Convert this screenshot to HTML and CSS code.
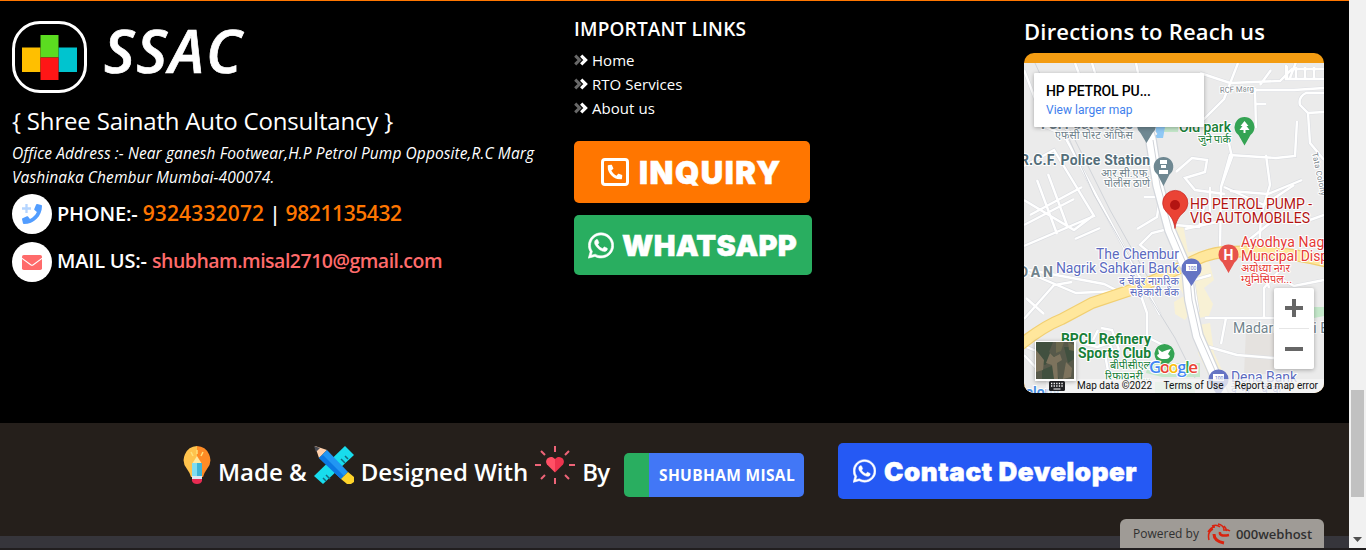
FILE: index.html
```html
<!DOCTYPE html>
<html lang="en">
<head>
<meta charset="utf-8">
<title>SSAC</title>
<link rel="stylesheet" href="styles.css">
</head>
<body>
<svg width="0" height="0" class="defs">
  <symbol id="whatsapp" viewBox="0 0 448 512"><path d="M380.9 97.1C339 55.1 283.2 32 223.9 32c-122.4 0-222 99.6-222 222 0 39.1 10.2 77.3 29.6 111L0 480l117.7-30.9c32.4 17.7 68.9 27 106.1 27h.1c122.3 0 224.1-99.6 224.1-222 0-59.3-25.2-115-67.1-157zm-157 341.6c-33.2 0-65.7-8.9-94-25.7l-6.7-4-69.8 18.3L72 359.2l-4.4-7c-18.5-29.4-28.2-63.3-28.2-98.2 0-101.7 82.8-184.5 184.6-184.5 49.3 0 95.6 19.2 130.4 54.1 34.8 34.9 56.2 81.2 56.1 130.5 0 101.8-84.9 184.6-186.6 184.6zm101.2-138.2c-5.500-2.800-32.800-16.200-37.900-18-5.100-1.900-8.800-2.800-12.500 2.800-3.700 5.600-14.300 18-17.600 21.800-3.200 3.700-6.500 4.200-12 1.400-32.600-16.300-54-29.100-75.500-66-5.700-9.800 5.700-9.100 16.300-30.300 1.800-3.700.9-6.900-.5-9.700-1.400-2.800-12.500-30.100-17.100-41.200-4.500-10.800-9.100-9.300-12.500-9.500-3.200-.2-6.900-.2-10.600-.2-3.700 0-9.700 1.400-14.800 6.900-5.100 5.600-19.400 19-19.400 46.300 0 27.300 19.900 53.700 22.600 57.400 2.800 3.700 39.100 59.700 94.800 83.800 35.200 15.200 49 16.500 66.600 13.900 10.700-1.600 32.800-13.400 37.400-26.400 4.600-13 4.600-24.100 3.200-26.400-1.300-2.500-5-3.900-10.500-6.600z"/></symbol>
  <symbol id="phone" viewBox="0 0 512 512"><path d="M493.400 24.600l-104-24c-11.300-2.600-22.900 3.300-27.500 13.900l-48 112c-4.200 9.800-1.400 21.300 6.900 28l60.600 49.600c-36 76.700-98.900 140.500-177.200 177.200l-49.600-60.600c-6.800-8.300-18.200-11.100-28-6.900l-112 48C3.900 366.500-2 378.100.6 389.400l24 104C27.100 504.200 36.700 512 48 512c256.100 0 464-207.500 464-464 0-11.200-7.700-20.900-18.600-23.400z"/></symbol>
  <symbol id="angles" viewBox="0 0 15 12"><path d="M1.200 1.600 5.600 6 1.200 10.400" fill="none" stroke="#686868" stroke-width="3"/><path d="M7.200 1.600 11.600 6 7.200 10.400" fill="none" stroke="#fff" stroke-width="3.200"/></symbol>
</svg>
<div class="window">
  <main class="page">
    <footer class="footer">
      <section class="about">
        <div class="brand">
          <div class="logo"><svg width="55" height="45" viewBox="0 0 55 45"><path fill="#ffbf00" d="M0 12.500h18.500v24.500H0z"/><path fill="#00c4cf" d="M36.500 12.500H55v24.500H36.500z"/><path fill="#5bdc20" d="M18.500 0h18v22.500h-18z"/><path fill="#ff1616" d="M18.500 22.500h18V45h-18z"/></svg></div>
          <span class="brand-name">SSAC</span>
        </div>
        <h3 class="company">{ Shree Sainath Auto Consultancy }</h3>
        <p class="address">Office Address :- Near ganesh Footwear,H.P Petrol Pump Opposite,R.C Marg<br>Vashinaka Chembur Mumbai-400074.</p>
        <div class="contact">
          <span class="disc"><svg width="20" height="20" viewBox="0 0 20 20"><path d="M4.500 0v9M0 4.500h9" stroke="#b5d5ff" stroke-width="2.300"/><use href="#phone" x="0" y="0" width="20" height="20" fill="#529dff"/></svg></span>
          <span class="contact-text"><span class="label">PHONE:-</span> <a class="tel">9324332072</a> | <a class="tel second">9821135432</a></span>
        </div>
        <div class="contact">
          <span class="disc"><svg width="20" height="15" viewBox="0 0 20 15"><rect width="20" height="15" rx="1.800" fill="#ff6b6b"/><path d="M-.5 3 8.700 9.800q1.300.9 2.600 0L20.500 3" fill="none" stroke="#fff" stroke-width="1.100"/></svg></span>
          <span class="contact-text"><span class="label">MAIL US:-</span> <a class="mail">shubham.misal2710@gmail.com</a></span>
        </div>
      </section>
      <section class="links">
        <h4 class="links-title">IMPORTANT LINKS</h4>
        <ul class="link-list">
          <li><svg class="angles"><use href="#angles"/></svg>Home</li>
          <li><svg class="angles"><use href="#angles"/></svg>RTO Services</li>
          <li><svg class="angles"><use href="#angles"/></svg>About us</li>
        </ul>
        <a class="btn inquiry"><svg width="28" height="28" viewBox="0 0 28 28"><rect x="1.500" y="1.500" width="25" height="25" rx="2.500" fill="none" stroke="#fff" stroke-width="3"/><use href="#phone" x="6.500" y="6.500" width="15" height="15" fill="#fff" transform="matrix(-1 0 0 1 28 0)"/></svg>INQUIRY</a>
        <a class="btn whatsapp"><svg width="26" height="29" class="wa"><use href="#whatsapp"/></svg>WHATSAPP</a>
      </section>
      <section class="directions">
        <h3 class="directions-title">Directions to Reach us</h3>
        <div class="map">
<svg class="map-canvas" width="300" height="330" viewBox="1024 63 300 330">
  <rect x="1024" y="63" width="300" height="330" fill="#ebebeb"/>
  <path fill="#f8f1d5" d="M1174 224h9l5 28 18-2 8 30-10 8 9 16-4 12-10 2-6-10-8 12-10-6-1-12 10-6-5-10zM1199 325l11-2 4 30 14 30h-16l-14-30z"/>
  <path fill="#c4e8ca" d="M1148 363h52v14h-38l-16-4zM1314 307h10v9l-10 2zM1160 124h18v8h-18zM1155 382h40v11h-40z"/>
  <path fill="#8fc8f5" d="M1156 127h9l-2 11h-8z"/>
  <path fill="#e5e2df" d="M1246 330h28v44h-30z"/>
  <g fill="none" stroke-width="3.600" stroke="#dcdee2"><use href="#streets"/></g>
  <g fill="none" stroke="#fff" stroke-width="2.400">
    <g id="streets">
    <path d="M1024 70l22 57 18 8 96 180M1092 63l6 20M1136 63l12 60 8 12M1075 63l22 60M1200 73l30 10 50-2 12-12h32M1238 63l-14 36-20 20-16 8M1286 65v14h38M1290 78l6-16M1255 88l1 40M1256 90h38l30-2M1256 104h10M1260 85l11-15M1287 66v12M1296 67v12M1305 67v12M1314 67v12M1324 93l-18 0q-8 4-6 12l8 8 16-1M1297 121l-2 35-19 2-46-3-9 32-1 65M1224 187l40 18 30-20M1221 187l11-30-6-27M1266 155l4 30-9 30-2 38M1308 113l2 30 14 17"/>
    <path d="M1024 200l50 30 20-15M1024 246l70-30-40-66-30 16M1030 215l52-28M1037 180l20 54M1048 174l20 54M1024 225l50-26M1075 239l25-11M1144 197h14M1160 197l-3 20-20 12M1150 253l-10-8 12-12 20-5M1175 225l24 2 5-20M1176 172l16-14 15 2-2 12-20 6 10 12 30 4M1230 191l38 3 34-14M1210 187v32M1221 221l-36 8M1280 215l-35 28M1296 225l28-10"/>
    <path d="M1024 271l52 22 42-2-14-7-80-15M1024 319l30-34 18-3M1044 314l-18-16M1140 293l7 20v24l20 10M1104 349l7 38M1082 343l15 4 12-4 10 20M1098 330l-5 10M1119 350l-7-20-11-2M1054 358l-30-12M1024 355l36 38M1205 318h96M1198 312l-5-32 18-5M1202 345l35 10 37 3M1226 318l-5 26M1280 270l-16 18v30M1265 270l4 18M1324 280l-30 6-20-11"/>
    </g>
  </g>
  <path fill="none" stroke="#d0d3d8" d="M1035 63l28 62 31 70 46 80M1147 293l28 45 20 40M1070 130l40 80 45 80"/>
  <path fill="none" stroke="#f1cf72" stroke-width="12" d="M1020 345Q1044 326 1062 319L1092 303 1140 287 1188 264Q1205 254 1223 252 1278 249 1328 262"/>
  <path fill="none" stroke="#ffe79c" stroke-width="9.500" d="M1020 345Q1044 326 1062 319L1092 303 1140 287 1188 264Q1205 254 1223 252 1278 249 1328 262"/>
  <path fill="none" stroke="#d4d7dc" stroke-width="12" d="M1142 110L1151 140 1158 185 1170 230 1187 270 1190 300 1198 336 1215 375 1224 396"/>
  <path fill="none" stroke="#fff" stroke-width="9.500" d="M1142 110L1151 140 1158 185 1170 230 1187 270 1190 300 1198 336 1215 375 1224 396"/>
  <path fill="none" stroke="#cfd2d8" d="M1153 140L1160 185 1172 230 1189 270 1192 300 1200 336 1217 375"/>
  <g class="place" text-anchor="end">
    <g fill="#71838c">
      <text x="1133" y="129" textLength="92" class="p13 b">FCI Post Office</text>
      <text x="1133" y="139" textLength="78" class="p11">एफसी पोस्ट ऑफिस</text>
      <text x="1150" y="165" textLength="130" class="p13 b dark">R.C.F. Police Station</text>
      <text x="1150" y="177" textLength="49" class="p11">आर.सी.एफ.</text>
      <text x="1150" y="187" textLength="46" class="p11">पोलीस ठाणे</text>
      <text x="1053" y="277" textLength="34" class="p13 b">DAN</text>
    </g>
    <g fill="#5c6bc0">
      <text x="1179" y="259" textLength="83" class="p13">The Chembur</text>
      <text x="1179" y="273" textLength="123" class="p13">Nagrik Sahkari Bank</text>
      <text x="1179" y="285" textLength="60" class="p11">द चेंबूर नागरिक</text>
      <text x="1179" y="296" textLength="49" class="p11">सहकारी बँक</text>
    </g>
    <g fill="#188038">
      <text x="1231" y="132" textLength="52" class="p13 m">Old park</text>
      <text x="1231" y="143" textLength="33" class="p11">जुने पार्क</text>
      <text x="1151" y="344" textLength="90" class="p13 b">BPCL Refinery</text>
      <text x="1151" y="358" textLength="73" class="p13 b">Sports Club</text>
      <text x="1151" y="369" textLength="41" class="p11">बीपीसीएल</text>
      <text x="1151" y="380" textLength="46" class="p11">रिफायनरी...</text>
    </g>
  </g>
  <g class="place">
    <text x="1190" y="209" textLength="122" class="p14" fill="#b31412">HP PETROL PUMP -</text>
    <text x="1190" y="223" textLength="120" class="p14" fill="#b31412">VIG AUTOMOBILES</text>
    <g fill="#e53935">
      <text x="1241" y="247" textLength="96" class="p13">Ayodhya Nagar</text>
      <text x="1241" y="261" textLength="128" class="p13">Muncipal Dispensary</text>
      <text x="1241" y="272" textLength="49" class="p11">अयोध्या नगर</text>
      <text x="1241" y="283" textLength="51" class="p11">म्युनिसिपल...</text>
    </g>
    <text x="1233" y="333" class="p13" fill="#71838c" textLength="96">Madarsa wali B</text>
    <text x="1231" y="382" textLength="66" class="p13" fill="#5c6bc0">Dena Bank</text>
    <text x="1231" y="393" textLength="50" class="p11" fill="#5c6bc0">देना बँक</text>
    <text x="1220" y="93" textLength="34" class="p8" fill="#7b858c" transform="rotate(-3 1220 93)">RCF Marg</text>
    <text x="1312" y="153" textLength="44" class="p8" fill="#7b858c" transform="rotate(78 1312 153)">Tata Colony</text>
    <text x="1016" y="397" class="p13 b" fill="#4a8fe0">Colony</text>
  </g>
  <g fill="#6f8892"><path d="M1146.500 143l-6-10a9.500 9.500 0 1 1 12 0zM1163.500 186l-6-11.500a9.800 9.800 0 1 1 12 0z"/></g>
  <path fill="#fff" d="M1160 160h7v4h-7zM1161 165h5v3h-5zM1159 170h9v4h-9z"/>
  <path fill="#34a353" d="M1244.500 145.500l-6-10.500a10 10 0 1 1 12 0zM1164.500 367l-8-7a10 10 0 1 1 16 0z"/>
  <path fill="#fff" d="M1244.500 121l4 5h-2l3 4h-4v3h-2v-3h-4l3-4h-2zM1158 349l4 3 5-2 4-1-3 5 2 2q-1 3-4 3h-4q-4-1-5-4l2-1z"/>
  <path fill="#6574c4" d="M1191.500 286l-6.500-10a10 10 0 1 1 13 0zM1218.500 397l-6.500-10a10 10 0 1 1 13 0z"/>
  <path fill="#fff" d="M1186 264h11v7h-11zM1213 374h11v7h-11z"/>
  <text x="1188" y="270" class="p5" fill="#6574c4">100</text><text x="1215" y="380" class="p5" fill="#6574c4">100</text>
  <path fill="#e7524b" d="M1228.500 273l-6-10.500a10 10 0 1 1 12 0z"/><text x="1223.500" y="260" class="p13 b" fill="#fff">H</text>
  <path fill="#ea4335" stroke="#c5221f" stroke-width=".7" d="M1175 228.500c-1-8-4-12-8-16a12.600 12.600 0 1 1 16.500 0c-5 4-7.500 9-8.500 16z"/><circle cx="1175" cy="205" r="5" fill="#b31412"/>
  <g class="google"><text x="1149" y="373" textLength="49"><tspan fill="#4285f4">G</tspan><tspan fill="#ea4335">o</tspan><tspan fill="#fbbc05">o</tspan><tspan fill="#4285f4">g</tspan><tspan fill="#34a853">l</tspan><tspan fill="#ea4335">e</tspan></text></g>
  <path fill="#f5f5f5" fill-opacity=".78" d="M1046 379h278v14h-278z"/>
  <rect x="1035" y="341" width="41" height="40" fill="#fff" class="shade"/>
  <path fill="#57594a" d="M1036 342h38v37h-38z"/>
  <path fill="#41503f" d="M1036 342h17l-4 10 6 5-10 8-9-3zM1064 347h10v12l-6 4zM1042 370l12-5 5 14h-17z"/>
  <path fill="#7d735d" d="M1050 353l4 4 6-3 2 6-5 3 1 16h-4l-2-14-6-2zM1036 350l8 10-1 10-7 2zM1066 362l6 6-1 9-8 2z"/>
  <path fill="#6c694f" d="M1056 342h8l-3 9-5 2zM1068 342l6 3v6l-5-1z"/>
  <rect x="1049" y="381" width="16" height="10" rx="1.500" fill="#202124"/><path stroke="#fff" stroke-width="1.300" stroke-dasharray="1.300 1.300" d="M1051 383.500h12.500M1051 386h12.500"/><path stroke="#fff" stroke-width="1.200" d="M1053.500 389h7"/>
  <g class="legal"><text x="1077" y="389" textLength="75">Map data ©2022</text><text x="1163.500" y="389" textLength="60">Terms of Use</text><text x="1234.500" y="389" textLength="83.500">Report a map error</text></g>
  <rect x="1274" y="288" width="40" height="81" rx="2" fill="#fff" class="shade"/>
  <path stroke="#e6e6e6" d="M1279 328.500h30"/><path stroke="#666" stroke-width="4" d="M1285 308h18M1294 299v18M1285 349h18"/>
  <rect x="1034" y="73" width="170" height="54" rx="1" fill="#fff" class="shade"/>
  <text x="1046" y="96" textLength="105" class="card-title">HP PETROL PU...</text>
  <text x="1046" y="114" textLength="86.500" class="card-link">View larger map</text>
</svg>
        </div>
      </section>
    </footer>
    <div class="credits">
      <div class="made">
        <svg width="30" height="40" viewBox="0 0 30 40" class="bulb"><path fill="#ffc34d" d="M15 1a14 14 0 0 0-10 23q3 4 4 8h6z"/><path fill="#ff8b25" d="M15 1a14 14 0 0 1 10 23q-3 4-4 8h-6z"/><path stroke="#ffe07a" stroke-width="1.500" d="M15 5v4M9 7l2 4M21 7l-2 4"/><path fill="#ffe9a0" d="M15 11l5 8H10z"/><path fill="#7fdcf0" d="M10 18h5v13h-5z"/><path fill="#3eb4d5" d="M15 18h5v13h-5z"/><path fill="#dfe7f2" d="M10 31h10v4H10z"/><path fill="#e92b52" d="M10 34h10v2q-1 3-5 3t-5-3z"/></svg>
        <span>Made &amp;</span>
        <svg width="40" height="40" viewBox="0 0 40 40" class="tools"><path fill="#18dced" d="M31 1l9 9L9 39l-9-8z"/><path stroke="#146a80" stroke-width="1.500" d="M31 11l3 3M27 14l4 4M12 30l4 4M9 33l3 3"/><path fill="#ffd0ac" d="M1 1l12 4-8 8z"/><path fill="#4a4d56" d="M0 1l6 2-4 4z"/><path fill="#2196f3" d="M13 5l21 22-7 7L5 13z"/><path fill="#0b78e3" d="M9 10l21 21-3 3L5 13z"/><path fill="#ffd42a" d="M34 27l6 5v5l-3 2h-4l-6-5z"/></svg>
        <span>Designed With</span>
        <svg width="40" height="40" viewBox="0 0 40 40" class="heart"><path fill="#ff5065" d="M20 27.500l-8-8c-3.500-5.500 4-10.500 8-5.500z"/><path fill="#ee344e" d="M20 27.500l8-8c3.500-5.500-4-10.500-8-5.500z"/><path stroke="#ee6478" stroke-width="2" d="M20 1v6M20 33v6M0 20h6M34 20h6M6 6l4 4M30 10l4-4M6 34l4-4M30 30l4 4"/></svg>
        <span class="by">By</span>
      </div>
      <a class="author">SHUBHAM MISAL</a>
      <a class="btn developer"><svg width="23" height="26" class="wa"><use href="#whatsapp"/></svg>Contact Developer</a>
    </div>
    <div class="status"></div>
    <div class="hosting"><span>Powered by</span><svg width="24" height="22" viewBox="0 0 24 22" fill="none" stroke="#d9230f"><path stroke-width="3" d="M7 11q0 7 10 9"/><path stroke-width="2.500" d="M13 9q-1 5 9 3"/><path stroke-width="1.500" d="M2 17q-2-8 4-11M1 9q3-5 7-5M5 3q5-2 8 1M11 1q5 1 6 5M17 3q3 3 2 5M23 8q-3-2-7-1"/></svg><span class="host">000webhost</span></div>
  </main>
  <div class="scrollbar"><span class="thumb"></span><svg width="9" height="5" viewBox="0 0 9 5"><path d="M0 0h9L4.500 5z" fill="#505050"/></svg></div>
</div>
</body>
</html>
```
FILE: styles.css
```css
* { box-sizing: border-box; }
body { margin: 0; font-family: "Open Sans", "Noto Sans", sans-serif; color: #fff; background: #211e1f; }
h3, h4, p, ul { margin: 0; padding: 0; }
.defs { display: block; }
.window { display: flex; width: 1366px; height: 550px; overflow: hidden; }
.page { position: relative; width: 1349px; height: 550px; background: #251f1b; }
.footer { display: grid; grid-template-columns: 562px 450px 300px; height: 423px; padding-left: 12px; background: #000; border-top: 1px solid #ff7600; }
.brand { display: flex; gap: 17px; margin-top: 20px; height: 72px; }
.logo { width: 75px; height: 72px; border: 3px solid #fff; border-radius: 28px; display: flex; align-items: center; justify-content: center; }
.brand-name { font-size: 59px; line-height: 58px; font-weight: 600; font-style: italic; letter-spacing: 2px; -webkit-text-stroke: .7px #fff; }
.company { font-size: 24px; line-height: 30px; font-weight: 400; margin-top: 13px; white-space: nowrap; letter-spacing: -.18px; }
.address { font-size: 15.5px; line-height: 24px; font-style: italic; margin-top: 5px; white-space: nowrap; letter-spacing: .1px; }
.contact { display: flex; align-items: center; gap: 5px; height: 40px; margin: 5px 0 8px; }
.contact + .contact { margin-top: 0; }
.disc { width: 40px; height: 40px; border-radius: 50%; background: #fff; display: flex; align-items: center; justify-content: center; }
.contact-text { font-size: 20px; line-height: 28px; margin-top: -2px; font-weight: 600; white-space: nowrap; }
.label { letter-spacing: -.2px; }
.tel { font-size: 21px; color: #ff7600; letter-spacing: .15px; }
.second { letter-spacing: -.4px; }
.mail { font-size: 19.500px; color: #ff6b6b; letter-spacing: -.5px; }
.links-title { font-size: 19px; line-height: 24px; font-weight: 600; margin-top: 16px; letter-spacing: .17px; }
.link-list { list-style: none; margin-top: 7px; font-size: 15px; line-height: 24px; letter-spacing: .05px; }
.link-list li { display: flex; align-items: center; gap: 3px; }
.angles { width: 15px; height: 12px; }
.btn { display: flex; align-items: center; border-radius: 5px; font-family: Inter, sans-serif; font-weight: 900; white-space: nowrap; -webkit-text-stroke: .5px #fff; }
.wa { fill: #fff; stroke: #fff; stroke-width: 10px; overflow: visible; }
.inquiry { width: 236px; height: 62px; margin-top: 21px; padding-left: 27px; gap: 10px; background: #ff7600; font-size: 31px; letter-spacing: 1.5px; }
.whatsapp { width: 238px; height: 60px; margin-top: 12px; padding-left: 14px; gap: 8px; background: #29ae60; font-size: 29px; letter-spacing: .25px; }
.directions-title { font-size: 22px; line-height: 30px; font-weight: 600; margin-top: 15px; white-space: nowrap; letter-spacing: .2px; }
.map { margin-top: 7px; width: 300px; height: 340px; padding-top: 10px; background: #f39c12; border-radius: 10px; overflow: hidden; }
.map-canvas { display: block; }
.place text { font-family: Roboto, "Noto Sans", sans-serif; paint-order: stroke; stroke: #fff; stroke-width: 2px; stroke-linejoin: round; }
.p14 { font-size: 14px; }
.p13 { font-size: 14px; }
.p11 { font-size: 11px; }
.p8 { font-size: 8px; }
.p5 { font: 5px Roboto, sans-serif; }
.b { font-weight: 700; }
.m { font-weight: 500; }
.map-canvas > .p13 { font-family: Roboto, sans-serif; }
.dark { fill: #546e7a; }
.google text { font: 600 17px "Open Sans", sans-serif; paint-order: stroke; stroke: #fff; stroke-width: 2px; }
.legal text { font: 10px Roboto, sans-serif; fill: #111; }
.shade { filter: drop-shadow(0 1px 2px rgba(0, 0, 0, .3)); }
.card-title { font: 500 14px Roboto, sans-serif; fill: #000; }
.card-link { font: 12px Roboto, sans-serif; fill: #427fed; }
.credits { display: flex; height: 113px; padding: 20px 0 0 182px; }
.made { display: flex; width: 442px; font-size: 24px; font-weight: 600; line-height: 58px; white-space: nowrap; }
.made svg { margin-top: 2px; flex: none; }
.made .bulb { margin-right: 6px; }
.made .tools { margin-left: 7px; margin-right: 7px; }
.made .heart { margin-left: 7px; margin-right: 7px; }
.by { letter-spacing: -.8px; }
.author { width: 180px; height: 44px; margin-top: 10px; padding-left: 10px; border-left: 25px solid #29ae60; border-radius: 5px; background: #4277f6; font-size: 15.500px; font-weight: 700; line-height: 44px; white-space: nowrap; letter-spacing: .35px; }
.developer { width: 314px; height: 56px; margin-left: 34px; padding-left: 15px; gap: 8px; background: #2559f4; font-size: 26px; letter-spacing: .57px; }
.status { height: 14px; background: #36353b; border-bottom: 2px solid #211e1f; }
.hosting { position: absolute; left: 1120px; top: 519px; width: 204px; height: 29px; padding-left: 13px; display: flex; align-items: center; background: #9f9b96; border-radius: 6px 6px 0 0; color: #303030; font-size: 12px; white-space: nowrap; }
.hosting svg { margin: 0 5px 0 8px; }
.host { font-weight: 600; font-size: 13px; }
.scrollbar { width: 17px; height: 548px; background: #f1f1f1; display: flex; flex-direction: column; align-items: center; }
.thumb { width: 13px; height: 107px; margin: 390px 0 40px; background: #c1c1c1; }
```
